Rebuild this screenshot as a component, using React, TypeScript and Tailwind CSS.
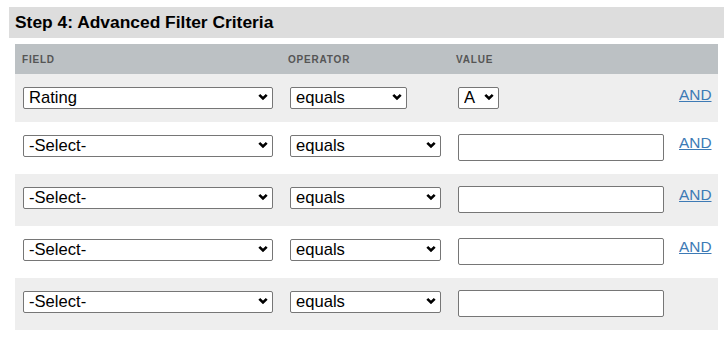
import React from 'react';

type Row = {
  field: string;
  valueType: 'select' | 'input';
  showAnd: boolean;
};

const rows: Row[] = [
  { field: 'Rating', valueType: 'select', showAnd: true },
  { field: '-Select-', valueType: 'input', showAnd: true },
  { field: '-Select-', valueType: 'input', showAnd: true },
  { field: '-Select-', valueType: 'input', showAnd: true },
  { field: '-Select-', valueType: 'input', showAnd: false },
];

const Chevron = () => (
  <svg
    className="pointer-events-none absolute right-[5px] top-1/2 -translate-y-1/2"
    width="10"
    height="7"
    viewBox="0 0 10 7"
    fill="none"
  >
    <path d="M1.3 1.3L5 5L8.7 1.3" stroke="#000" strokeWidth="2.6" />
  </svg>
);

const Select = ({
  value,
  options,
  width,
}: {
  value: string;
  options: string[];
  width: string;
}) => (
  <div className={`relative h-[22px] ${width}`}>
    <select
      defaultValue={value}
      className="h-full w-full appearance-none rounded-[2px] border border-[#767676] bg-white pl-[5px] pr-[20px] text-[16.6px] leading-[20px] text-black"
    >
      {options.map((o) => (
        <option key={o}>{o}</option>
      ))}
    </select>
    <Chevron />
  </div>
);

export default function App() {
  return (
    <div className="w-[724px] h-[337px] bg-white font-['Liberation_Sans',Arial,sans-serif]">
      <div className="pt-[7px] pl-[9px]">
        <div className="h-[31px] bg-[#dddddd] pl-[6px] flex items-center">
          <h2 className="text-[17.4px] font-bold text-black leading-none">
            Step 4: Advanced Filter Criteria
          </h2>
        </div>
      </div>

      <div className="mt-[6px] ml-[15px] w-[703px]">
        <div className="flex h-[30px] items-center bg-[#bcc1c4] text-[10px] font-bold tracking-[0.8px] text-[#555555]">
          <div className="w-[267px] pl-[7px]">FIELD</div>
          <div className="w-[168px] pl-[6px]">OPERATOR</div>
          <div className="w-[222px] pl-[6px]">VALUE</div>
          <div className="flex-1" />
        </div>

        {rows.map((row, i) => (
          <div
            key={i}
            className={`flex items-start pt-3 ${i === 0 ? 'h-[48px]' : 'h-[52px]'} ${
              i % 2 === 0 ? 'bg-[#eeeeee]' : 'bg-white'
            }`}
          >
            <div className="w-[267px] pl-[8px]">
              <Select
                value={row.field}
                options={[row.field]}
                width="w-[250px]"
              />
            </div>
            <div className="w-[168px] pl-[8px]">
              <Select
                value="equals"
                options={['equals', 'not equal to']}
                width={i === 0 ? 'w-[117px]' : 'w-[151px]'}
              />
            </div>
            <div className="w-[222px] pl-[8px]">
              {row.valueType === 'select' ? (
                <Select value="A" options={['A', 'B', 'C']} width="w-[41px]" />
              ) : (
                <input
                  type="text"
                  className="h-[27px] w-[206px] rounded-[2px] border border-[#767676] bg-white px-1 text-[14px]"
                />
              )}
            </div>
            <div className="pl-[7px] leading-none">
              {row.showAnd && (
                <a
                  href="#"
                  className="block text-[15.4px] leading-[18px] text-[#3d7ab5] underline"
                >
                  AND
                </a>
              )}
            </div>
          </div>
        ))}
      </div>
    </div>
  );
}
